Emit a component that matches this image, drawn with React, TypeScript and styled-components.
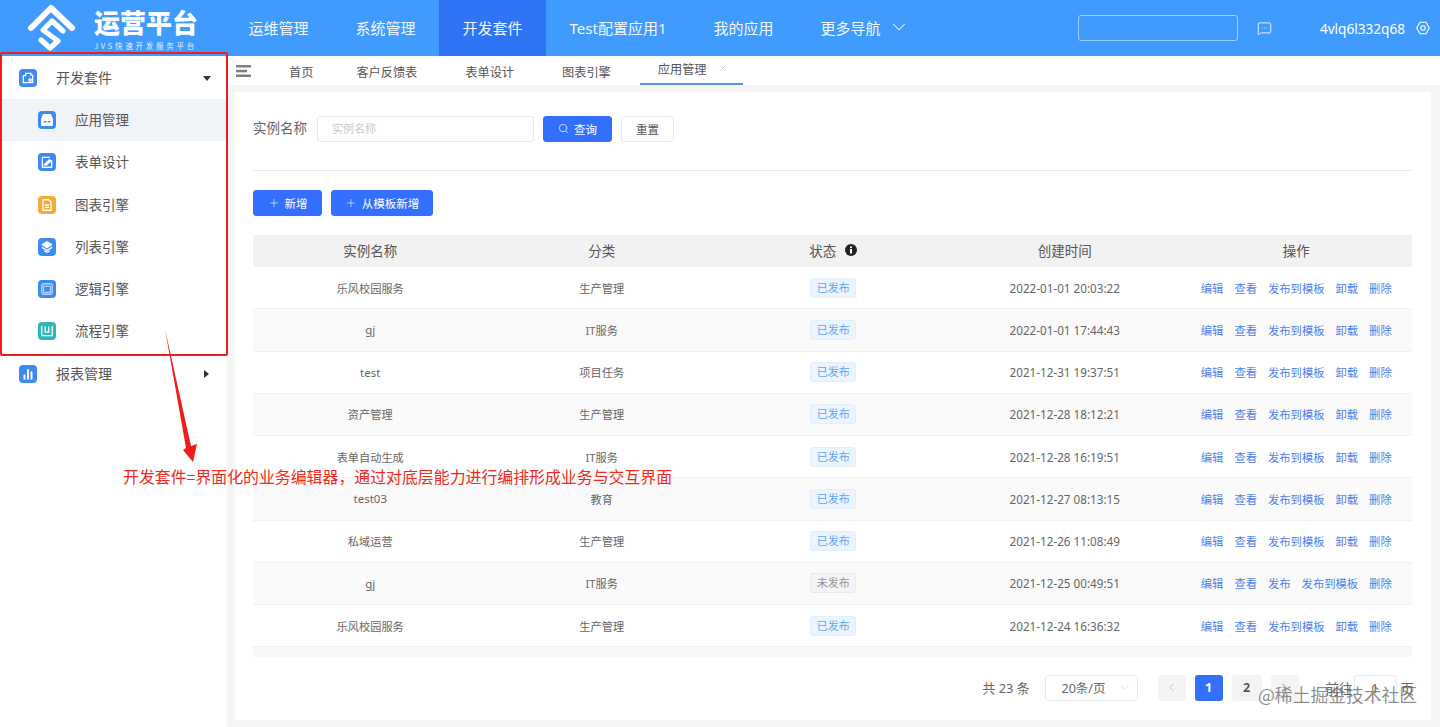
import React from "react";
import styled, { createGlobalStyle } from "styled-components";
import { ChevronDown, ChevronLeft, ChevronRight, MessageSquareMore, Plus, Search, X } from "lucide-react";

const Global = createGlobalStyle`
  html, body { margin: 0; padding: 0; background: #f5f5f5; }
  * { box-sizing: border-box; }
  body { font-family: "Noto Sans", "Noto Sans CJK SC", sans-serif; color: #666; }
`;

const Page = styled.div`position: relative; width: 1440px; height: 727px; overflow: hidden; display: flex; flex-direction: column;`;
const Header = styled.header`height: 56px; flex: none; background: #409bfe; display: flex; align-items: stretch; color: #fff;`;
const Brand = styled.div`width: 225px; flex: none; display: flex; padding: 3px 0 0 26px; gap: 16px;`;
const BrandText = styled.div`display: flex; flex-direction: column; padding-top: 3px;`;
const BrandTitle = styled.div`font: 900 26px/32px "Noto Sans CJK SC", sans-serif; letter-spacing: 0;`;
const BrandSub = styled.div`font: 400 7.5px/10px "Noto Sans CJK SC", sans-serif; letter-spacing: 2.75px; margin-top: 3px; opacity: .85; white-space: nowrap;`;
const NavItem = styled.div<{ $active?: boolean }>`
  padding: 0 23.5px 2px; display: flex; align-items: center; gap: 7px; font-size: 15px; color: #f2f8ff;
  background: ${p => (p.$active ? "#2f74f4" : "transparent")}; white-space: nowrap;
`;
const HeaderRight = styled.div`margin-left: auto; display: flex; align-items: center; padding-right: 10px;`;
const HeaderSearch = styled.div`width: 160px; height: 26px; border: 1px solid rgba(255,255,255,.5); border-radius: 3px; margin-right: 19px;`;
const UserName = styled.span`font-size: 13.6px; margin: 0 11px 0 48px;`;

const Body = styled.div`flex: 1; display: flex; min-height: 0;`;
const Sidebar = styled.aside`width: 227px; flex: none; background: #fff; padding-top: 1px;`;
const MenuRow = styled.div<{ $sub?: boolean; $active?: boolean; $last?: boolean }>`
  height: 42.2px; display: flex; align-items: center; gap: 19px;
  padding-left: ${p => (p.$sub ? "38px" : "19px")}; padding-right: 16px;
  margin-top: ${p => (p.$last ? "1px" : "0")};
  background: ${p => (p.$active ? "#f0f3f8" : "transparent")};
  font-size: ${p => (p.$sub ? "13.5px" : "14px")}; color: #555;
`;
const MenuLabel = styled.span`margin-bottom: 2px;`;
const SideIcon = styled.span<{ $color?: string }>`
  width: 18px; height: 18px; border-radius: 4px; background: ${p => p.$color || "#3d8bf2"};
  display: flex; align-items: center; justify-content: center; flex: none;
`;
const Caret = styled.span<{ $open?: boolean }>`
  margin-left: auto; width: 0; height: 0; border-style: solid;
  ${p => p.$open
    ? "border-width: 5px 4.5px 0 4.5px; border-color: #333 transparent transparent transparent;"
    : "border-width: 4.5px 0 4.5px 5px; border-color: transparent transparent transparent #333; margin-right: 2px;"}
`;

const Main = styled.main`flex: 1; min-width: 0; display: flex; flex-direction: column;`;
const TabBar = styled.div`height: 29px; flex: none; background: #fff; display: flex; align-items: stretch; padding-left: 9px; font-size: 12.2px; color: #555;`;
const Hamburger = styled.div`width: 15px; display: flex; align-items: center; margin-right: 14px;`;
const Tab = styled.div<{ $active?: boolean; $tight?: boolean }>`
  display: flex; align-items: center; gap: 11px; white-space: nowrap;
  padding: ${p => (p.$active ? "0 16px 2px 18px" : "3px 24px 0 24px")};
  ${p => p.$tight && "padding-right: 19px;"}
  ${p => p.$active && "border-bottom: 2px solid #5b93e6; margin-left: 5px; height: 29px;"}
`;
const Card = styled.section`margin: 7px 9px 7px 8px; flex: 1; background: #fff; padding: 23px 19px 0 18px; display: flex; flex-direction: column;`;
const FilterRow = styled.div`display: flex; align-items: center; height: 27px;`;
const FilterLabel = styled.label`font-size: 13.5px; color: #666; margin: 0 10px 3px 0;`;
const FilterInput = styled.div`width: 217px; height: 26px; border: 1px solid #e4e7ed; border-radius: 3px; padding-left: 14px; font-size: 11px; line-height: 24px; color: #c8c9cc; margin-right: 9px;`;
const Btn = styled.button<{ $ghost?: boolean; $w: number }>`
  width: ${p => p.$w}px; height: 26px; border-radius: 3px; padding: 0; display: inline-flex; align-items: center; justify-content: center; gap: 5px;
  font: 400 11.5px "Noto Sans CJK SC", sans-serif;
  background: ${p => (p.$ghost ? "#fff" : "#3370ff")}; color: ${p => (p.$ghost ? "#555" : "#fff")};
  border: 1px solid ${p => (p.$ghost ? "#e8eaee" : "#3370ff")};
`;
const ButtonGap = styled.div`display: flex; gap: 9px;`;
const Divider = styled.hr`border: 0; border-top: 1px solid #e6e8ec; margin: 28px 0 19px;`;
const Table = styled.div`margin-top: 19px;`;
const Cols = styled.div`display: grid; grid-template-columns: repeat(5, 1fr); align-items: center; justify-items: center; padding-left: 1.5px;`;
const HeadRow = styled(Cols)`height: 32px; background: #f2f2f2; font-size: 13.5px; color: #555; padding-bottom: 2px;`;
const StatusHead = styled.span`display: inline-flex; align-items: center; gap: 9px;`;
const Row = styled(Cols)<{ $alt: boolean }>`
  height: 42.25px; background: ${p => (p.$alt ? "#fafafa" : "#fff")}; border-bottom: 1px solid #eef0f3; font-size: 11.2px; color: #666;
`;
const Latin = styled.span`font-size: 11.5px;`;
const Time = styled.span`font-size: 11.7px; color: #666;`;
const StatusTag = styled.span<{ $off?: boolean }>`
  width: 46px; height: 20px; border-radius: 3px; font-size: 11px; line-height: 18px; text-align: center;
  background: ${p => (p.$off ? "#f4f4f5" : "#ecf5ff")}; color: ${p => (p.$off ? "#909399" : "#5aa6f5")};
  border: 1px solid ${p => (p.$off ? "#e9e9eb" : "#e1effd")};
`;
const Actions = styled.span`display: flex; gap: 11px; font-size: 11.3px; color: #4f7fe8; white-space: nowrap;`;
const ScrollTrack = styled.div`height: 10px; background: #f7f7f7;`;
const Pager = styled.div`display: flex; align-items: center; justify-content: flex-end; margin-top: 17.5px; margin-right: -2px; height: 26px; font-size: 12.8px; color: #666;`;
const PageSelect = styled.div`width: 93px; height: 26px; border: 1px solid #e8eaee; border-radius: 3px; display: flex; align-items: center; justify-content: space-between; padding: 0 6px 0 16px; margin: 0 20px 0 15px; font-size: 12.5px;`;
const PageBtn = styled.div<{ $on?: boolean; $w?: number }>`
  width: ${p => p.$w || 28}px; height: 26px; border-radius: 3px; margin-right: 9px; display: flex; align-items: center; justify-content: center;
  font-weight: 700; font-size: 12.5px; background: ${p => (p.$on ? "#3370ff" : "#f4f4f5")}; color: ${p => (p.$on ? "#fff" : "#555")};
`;
const Goto = styled.span`margin-left: 18px; font-size: 13.5px;`;
const GotoInput = styled.div`width: 43px; height: 26px; border: 1px solid #e8eaee; border-radius: 3px; text-align: center; line-height: 24px; margin: 0 4px 0 1px;`;
const Unit = styled.span`font-size: 13.5px;`;

const RedBox = styled.div`position: absolute; left: 0; top: 52px; width: 228px; height: 304px; border: 2px solid #f01c1c; border-radius: 2px; pointer-events: none;`;
const ArrowLayer = styled.svg`position: absolute; left: 160px; top: 325px;`;
const Annotation = styled.div`position: absolute; left: 123px; top: 466px; font: 400 15.9px/22px "Noto Sans CJK SC", sans-serif; color: #ee2a22; white-space: nowrap;`;
const Watermark = styled.div`position: absolute; left: 1258px; top: 681px; font: 400 17.8px/26px "Noto Sans CJK SC", sans-serif; color: rgba(95,95,95,.72); white-space: nowrap;`;

const I = ({ children }: { children: React.ReactNode }) => (
  <svg width="14" height="14" viewBox="0 0 12 12" fill="none" stroke="#fff" strokeWidth="1.1" strokeLinejoin="round" strokeLinecap="round">{children}</svg>
);

const rows = [
  ["乐风校园服务", "生产管理", "2022-01-01 20:03:22"],
  ["gj", "IT服务", "2022-01-01 17:44:43"],
  ["test", "项目任务", "2021-12-31 19:37:51"],
  ["资产管理", "生产管理", "2021-12-28 18:12:21"],
  ["表单自动生成", "IT服务", "2021-12-28 16:19:51"],
  ["test03", "教育", "2021-12-27 08:13:15"],
  ["私域运营", "生产管理", "2021-12-26 11:08:49"],
  ["gj", "IT服务", "2021-12-25 00:49:51"],
  ["乐风校园服务", "生产管理", "2021-12-24 16:36:32"],
];

export default function App() {
  return (
    <Page>
      <Global />
      <Header>
        <Brand>
          <svg width="52" height="50" viewBox="26 3 52 50" fill="none" stroke="#fff" strokeWidth="6" strokeLinecap="round" strokeLinejoin="round" style={{ flex: "none" }}>
            <path d="M31 28 L51 8 L72 28" />
            <path d="M63 31 L52 21 L43 30 L58 41 L50 48 L41 40" strokeWidth="5.2" />
          </svg>
          <BrandText>
            <BrandTitle>运营平台</BrandTitle>
            <BrandSub>JVS快速开发服务平台</BrandSub>
          </BrandText>
        </Brand>
        <NavItem>运维管理</NavItem>
        <NavItem>系统管理</NavItem>
        <NavItem $active>开发套件</NavItem>
        <NavItem>Test配置应用1</NavItem>
        <NavItem>我的应用</NavItem>
        <NavItem>更多导航<ChevronDown size={22} strokeWidth={1.1} /></NavItem>
        <HeaderRight>
          <HeaderSearch />
          <MessageSquareMore size={15} strokeWidth={1.4} />
          <UserName>4vlq6l332q68</UserName>
          <svg width="14" height="14" viewBox="0 0 14 14" fill="none" stroke="#fff" strokeWidth="1.1">
            <path d="M4 1.2 H10 L13.3 7 L10 12.8 H4 L.7 7 Z" strokeLinejoin="round" />
            <circle cx="7" cy="7" r="2.2" />
          </svg>
        </HeaderRight>
      </Header>
      <Body>
        <Sidebar>
          <MenuRow>
            <SideIcon><I><path d="M2 4 V10 H10 V3.5 H8.5 V2 H4 V4 Z" /><circle cx="7.8" cy="7.8" r="1.1" /></I></SideIcon>
            <MenuLabel>开发套件</MenuLabel><Caret $open />
          </MenuRow>
          <MenuRow $sub $active>
            <SideIcon><I><path d="M1.5 5 V10.5 H10.5 V5 Z M1.5 5 L3 1.5 H9 L10.5 5" fill="#fff" /><path d="M3.5 7.5 H5 M7 7.5 H8.5" stroke="#3d8bf2" /></I></SideIcon>
            <MenuLabel>应用管理</MenuLabel>
          </MenuRow>
          <MenuRow $sub>
            <SideIcon><I><path d="M2 2 H8 M2 2 V10.5 H10 V5" /><path d="M3.5 8.5 L8 4 L9.5 5 L5.5 8.5 Z" fill="#fff" /></I></SideIcon>
            <MenuLabel>表单设计</MenuLabel>
          </MenuRow>
          <MenuRow $sub>
            <SideIcon $color="#f3ab3c"><I><path d="M2.5 1.5 H7.5 L9.5 3.5 V10.5 H2.5 Z" /><path d="M4.5 6 H7.5 M4.5 8 H7.5" /></I></SideIcon>
            <MenuLabel>图表引擎</MenuLabel>
          </MenuRow>
          <MenuRow $sub>
            <SideIcon><I><path d="M6 1.5 L10 4 L6 6.5 L2 4 Z" fill="#fff" /><path d="M2 6.5 L6 9 L10 6.5 M4 9.5 L6 10.5 L8 9.5" /></I></SideIcon>
            <MenuLabel>列表引擎</MenuLabel>
          </MenuRow>
          <MenuRow $sub>
            <SideIcon><I><rect x="1.5" y="1.5" width="9" height="9" rx="2" stroke="#b9d6fb" /><rect x="3" y="3.5" width="6" height="5.5" rx="1" stroke="#b9d6fb" /></I></SideIcon>
            <MenuLabel>逻辑引擎</MenuLabel>
          </MenuRow>
          <MenuRow $sub>
            <SideIcon $color="#2fb6b8"><I><path d="M1.5 2 V10 H10.5 V2" /><path d="M4.5 2.5 V7 M7.5 2.5 V7 M4.5 7 H7.5" /></I></SideIcon>
            <MenuLabel>流程引擎</MenuLabel>
          </MenuRow>
          <MenuRow $last>
            <SideIcon><I><path d="M3 7 V10 M6 2.5 V10 M9 4.5 V10" strokeWidth="1.7" /></I></SideIcon>
            <MenuLabel>报表管理</MenuLabel><Caret />
          </MenuRow>
        </Sidebar>
        <Main>
          <TabBar>
            <Hamburger>
              <svg width="15" height="12" viewBox="0 0 15 12" fill="#7d7f88">
                <rect width="15" height="2.5" />
                <rect y="4.8" width="11" height="2.5" />
                <rect y="9.5" width="15" height="2.5" />
              </svg>
            </Hamburger>
            <Tab $tight>首页</Tab>
            <Tab>客户反馈表</Tab>
            <Tab>表单设计</Tab>
            <Tab>图表引擎</Tab>
            <Tab $active>应用管理<X size={9} strokeWidth={1.2} color="#aaa" /></Tab>
          </TabBar>
          <Card>
            <FilterRow>
              <FilterLabel>实例名称</FilterLabel>
              <FilterInput>实例名称</FilterInput>
              <ButtonGap>
                <Btn $w={69}><Search size={11} strokeWidth={1.5} />查询</Btn>
                <Btn $ghost $w={53}>重置</Btn>
              </ButtonGap>
            </FilterRow>
            <Divider />
            <ButtonGap>
              <Btn $w={69}><Plus size={12} strokeWidth={1.2} />新增</Btn>
              <Btn $w={102}><Plus size={12} strokeWidth={1.2} />从模板新增</Btn>
            </ButtonGap>
            <Table>
              <HeadRow>
                <span>实例名称</span>
                <span>分类</span>
                <StatusHead>
                  状态
                  <svg width="12" height="12" viewBox="0 0 12 12">
                    <circle cx="6" cy="6" r="6" fill="#222" />
                    <rect x="5" y="5" width="2" height="4.5" fill="#fff" />
                    <rect x="5" y="2.5" width="2" height="1.6" fill="#fff" />
                  </svg>
                </StatusHead>
                <span>创建时间</span>
                <span>操作</span>
              </HeadRow>
              {rows.map((r, i) => (
                <Row key={i} $alt={i % 2 === 1}>
                  {/^[a-z]/.test(r[0]) ? <Latin>{r[0]}</Latin> : <span>{r[0]}</span>}
                  <span>{r[1]}</span>
                  <StatusTag $off={i === 7}>{i === 7 ? "未发布" : "已发布"}</StatusTag>
                  <Time>{r[2]}</Time>
                  {i === 7 ? (
                    <Actions><span>编辑</span><span>查看</span><span>发布</span><span>发布到模板</span><span>删除</span></Actions>
                  ) : (
                    <Actions><span>编辑</span><span>查看</span><span>发布到模板</span><span>卸载</span><span>删除</span></Actions>
                  )}
                </Row>
              ))}
              <ScrollTrack />
            </Table>
            <Pager>
              <span>共 23 条</span>
              <PageSelect>20条/页<ChevronDown size={13} strokeWidth={1.2} color="#c0c4cc" /></PageSelect>
              <PageBtn><ChevronLeft size={13} strokeWidth={1.4} color="#b4b7bd" /></PageBtn>
              <PageBtn $on>1</PageBtn>
              <PageBtn $w={30}>2</PageBtn>
              <PageBtn><ChevronRight size={13} strokeWidth={1.4} color="#777" /></PageBtn>
              <Goto>前往</Goto>
              <GotoInput>1</GotoInput>
              <Unit>页</Unit>
            </Pager>
          </Card>
        </Main>
      </Body>
      <RedBox />
      <ArrowLayer width="45" height="145" viewBox="160 325 45 145">
        <path d="M165 329 L191 446 L197 444 L193 462 L183 450 L186 448 Z" fill="#f01c1c" />
      </ArrowLayer>
      <Annotation>开发套件=界面化的业务编辑器，通过对底层能力进行编排形成业务与交互界面</Annotation>
      <Watermark>@稀土掘金技术社区</Watermark>
    </Page>
  );
}
